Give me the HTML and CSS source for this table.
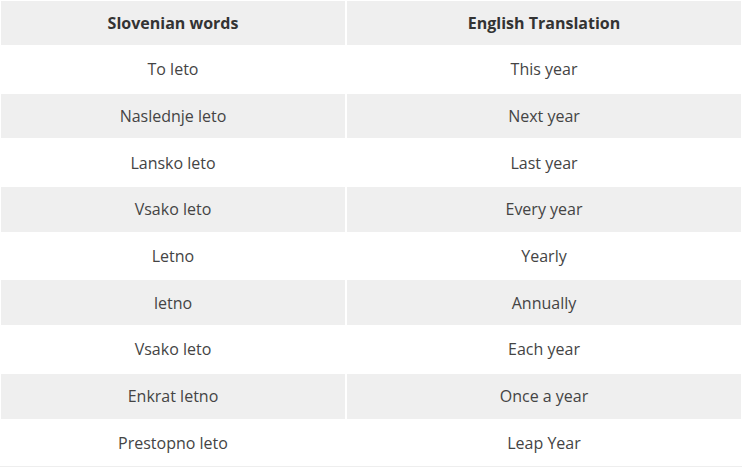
FILE: index.html
```html
<!DOCTYPE html>
<html>
<head>
<meta charset="utf-8">
<link rel="stylesheet" href="styles.css">
</head>
<body>
<table class="words">
  <thead>
    <tr><th>Slovenian words</th><th>English Translation</th></tr>
  </thead>
  <tbody>
    <tr><td>To leto</td><td>This year</td></tr>
    <tr><td>Naslednje leto</td><td>Next year</td></tr>
    <tr><td>Lansko leto</td><td>Last year</td></tr>
    <tr><td>Vsako leto</td><td>Every year</td></tr>
    <tr><td>Letno</td><td>Yearly</td></tr>
    <tr><td>letno</td><td>Annually</td></tr>
    <tr><td>Vsako leto</td><td>Each year</td></tr>
    <tr><td>Enkrat letno</td><td>Once a year</td></tr>
    <tr><td>Prestopno leto</td><td>Leap Year</td></tr>
  </tbody>
</table>
</body>
</html>
```
FILE: styles.css
```css
html, body {
  margin: 0;
  padding: 0;
  background: #fff;
}
.words {
  width: 742px;
  border-collapse: separate;
  border-spacing: 0;
  font-family: "Open Sans", "Liberation Sans", sans-serif;
  font-size: 16px;
  color: #444;
  border-bottom: 1px solid #eee;
}
.words th,
.words td {
  border: 1px solid #fff;
  text-align: center;
  padding: 0;
  vertical-align: middle;
}
.words th {
  height: 44px;
  font-weight: 700;
  color: #333;
  background: #efefef;
}
.words td {
  height: 44.7px;
}
.words tbody tr:nth-child(even) td {
  background: #efefef;
}
.words th:first-child,
.words td:first-child {
  width: 344px;
}
```
